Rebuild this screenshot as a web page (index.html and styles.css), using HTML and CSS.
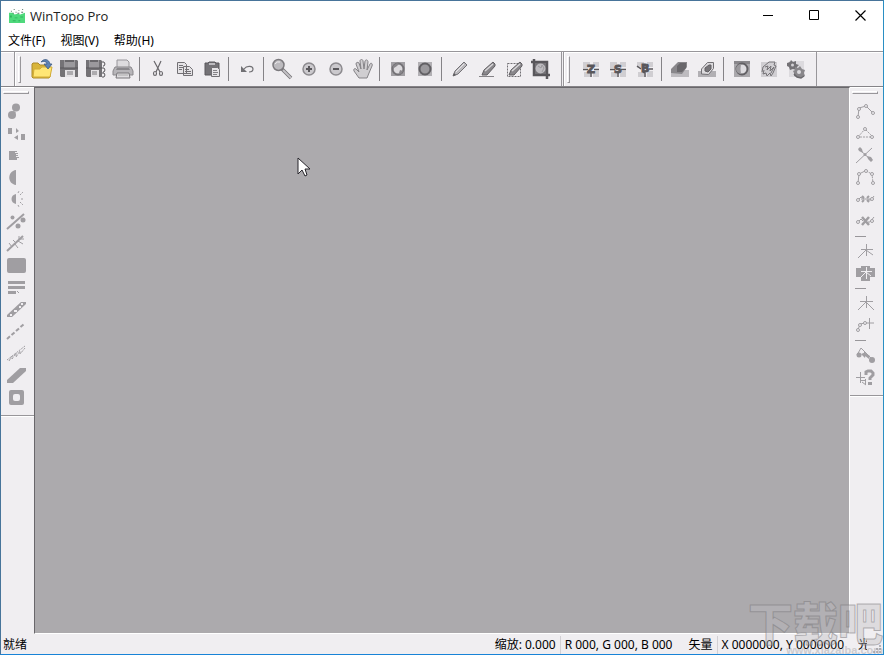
FILE: index.html
```
<!DOCTYPE html>
<html lang="zh-CN">
<head>
    <meta charset="UTF-8">
    <meta name="viewport" content="width=device-width, initial-scale=1.0">
    <title>WinTopo Pro</title>
    <link rel="stylesheet" href="styles.css">
</head>
<body>
<div class="window">
  <!-- Title bar -->
  <header class="title-bar">
    <svg class="logo" viewBox="0 0 17 17"><path d="M0 5h4l2 2 3-1 3 1 5-2v11H0z" fill="#4fd97c"/><path d="M1 8h2v2H1zM6 10h3v1H6zM12 9h3v1h-3zM4 13h3v1H4zM10 13h2v1h-2z" fill="#2fb55c"/><path d="M2 3h1v1H2zM5 1h1v1H5zM7 4h1v1H7zM10 2h1v1h-1zM14 1h1v1h-1zM13 4h2v1h-2zM4 5h1v1H4zM9 5h2v1H9z" fill="#557564"/></svg>
    <h1>WinTopo Pro</h1>
    <div class="window-buttons">
      <button aria-label="最小化"><svg viewBox="0 0 11 11"><path d="M0 5.5h10" stroke="#000"/></svg></button>
      <button aria-label="最大化"><svg viewBox="0 0 11 11"><path d="M.5 .5h9v9h-9z" fill="none" stroke="#000"/></svg></button>
      <button aria-label="关闭"><svg viewBox="0 0 11 11"><path d="M.5 .5l10 10M10.5 .5l-10 10" stroke="#000" stroke-width="1.2"/></svg></button>
    </div>
  </header>

  <!-- Menu -->
  <nav class="menu-bar">
    <button>文件(F)</button>
    <button>视图(V)</button>
    <button>帮助(H)</button>
  </nav>

  <!-- Toolbars -->
  <div class="toolbars">
    <div class="toolbar" role="toolbar" aria-label="标准">
      <span class="grip"></span>
      <button aria-label="打开"><svg viewBox="0 0 22 22"><path d="M1 6l1-1h5l2 2h9l1 2v10l-1 1H2l-1-1z" fill="#d9b53a" stroke="#ad8b2b"/><path d="M2 19l1-8h6l2-2h10l-2 10z" fill="#ffe675" stroke="#d2ac36"/><path d="M10 4c3-4 8-3 9 2h2l-4 5-4-5h3c-1-3-3-3-6-2z" fill="#5e82b5" stroke="#38547c" stroke-width=".7"/></svg></button>
      <button aria-label="保存"><svg viewBox="0 0 22 22"><path d="M2 2h17l1 1v16H3l-1-1z" fill="#747276"/><path d="M6 2h11v8H6z" fill="#9b999d"/><path d="M7 2h9v2H7z" fill="#69676b"/><path d="M7 12h10v7H7z" fill="#e4e2e5"/><path d="M9 14h6M9 16h6" stroke="#777579"/><path d="M2 10h18" stroke="#58565b"/></svg></button>
      <button aria-label="另存为"><svg viewBox="0 0 22 22"><path d="M1 2h15l1 1v16H2l-1-1z" fill="#747276"/><path d="M4 2h10v8H4z" fill="#9b999d"/><path d="M5 2h8v2H5z" fill="#69676b"/><path d="M6 12h8v7H6z" fill="#e4e2e5"/><path d="M7 14h5M7 16h5" stroke="#777579"/><path d="M1 10h16M17 4h2l1 2-1 2h-1M17 10h2l1 2-1 2h-1M17 15h2l1 2-1 2h-2" stroke="#58565b" fill="none"/></svg></button>
      <button aria-label="打印"><svg viewBox="0 0 22 22"><path d="M5 9V2h10l2 2v5" fill="#dddbde" stroke="#98969a"/><path d="M3 9h16l2 4v4H1v-4z" fill="#b7b5b9" stroke="#89878b"/><path d="M5 10h12l1 2H4z" fill="#89878b"/><path d="M5 15h12l1 5H4z" fill="#dedcdf" stroke="#79777b"/><path d="M6 17h10" stroke="#aaa"/></svg></button>
      <span class="separator"></span>
      <button aria-label="剪切"><svg viewBox="0 0 22 22" fill="none" stroke="#69676b" stroke-width="1.2"><path d="M7 3l6 11M14 3L9 14"/><ellipse cx="8" cy="15.5" rx="1.5" ry="2"/><ellipse cx="14" cy="15.5" rx="1.5" ry="2"/></svg></button>
      <button aria-label="复制"><svg viewBox="0 0 22 22" fill="#e5e3e6" stroke="#727074"><path d="M3.5 4.5h7l2 2v9h-9zM9.5 8.5h6l3 3v6h-9z"/><path d="M5 7.5h4M5 9.5h4M5 11.5h3M11 11.500h4M11 13.500h6M11 15.500h6"/></svg></button>
      <button aria-label="粘贴"><svg viewBox="0 0 22 22"><path d="M4 5h3l1-1h6l1 1h3v12H4z" fill="#747276" stroke="#5b595d"/><path d="M8 5h6v2H8z" fill="#bdbbbf"/><path d="M10.5 9.5h6l2 2v7h-8z" fill="#e7e5e8" stroke="#727074"/><path d="M12 12.5h4M12 14.5h5M12 16.5h4" stroke="#858387"/></svg></button>
      <span class="separator"></span>
      <button aria-label="撤销"><svg viewBox="0 0 22 22"><path d="M5 8v6h6z" fill="#717074"/><path d="M8 11c3-4 9-3 9 0 0 2-2 3-4 3" fill="none" stroke="#717074" stroke-width="1.2"/></svg></button>
      <span class="separator"></span>
      <button aria-label="缩放"><svg viewBox="0 0 22 22"><path d="M11 11l9 9" stroke="#737175" stroke-width="3.5"/><path d="M12 12l8 8" stroke="#c4c2c6" stroke-width="2"/><circle cx="7.5" cy="7" r="5.500" fill="#bcbabe" stroke="#7c7a7e" stroke-width="1.5"/><path d="M4 6q2-3 5-2" stroke="#eeecef" fill="none"/></svg></button>
      <button aria-label="放大"><svg viewBox="0 0 22 22"><circle cx="11" cy="11" r="6" fill="#cbc9cd" stroke="#8d8b8f" stroke-width="1.500"/><path d="M8 11h6M11 8v6" stroke="#59575b" stroke-width="2"/></svg></button>
      <button aria-label="缩小"><svg viewBox="0 0 22 22"><circle cx="11" cy="11" r="6" fill="#cbc9cd" stroke="#8d8b8f" stroke-width="1.500"/><path d="M8 11h6" stroke="#59575b" stroke-width="2"/></svg></button>
      <button aria-label="平移"><svg viewBox="0 0 22 22"><path d="M7 20l-5-7c-1-2 1-3 2-2l3 3L4 6c0-2 2-2 3-1l2 6-1-8c0-2 3-2 3 0l1 8 1-8c1-2 3-1 3 1l-1 8 3-6c1-2 3 0 2 2l-3 7-2 5z" fill="#d0ced1" stroke="#858387"/></svg></button>
      <span class="separator"></span>
      <button aria-label="图像"><svg viewBox="0 0 22 22"><path d="M4 4h14v14H4z" fill="#a19fa3"/><circle cx="11" cy="11" r="5.500" fill="#dcdadd" stroke="#747276" stroke-width="2"/><path d="M6 8l4-3 2 1-2 2-3 2-1 3zM13 12l3 1-2 3-2-1z" fill="#89878b"/></svg></button>
      <button aria-label="矢量"><svg viewBox="0 0 22 22"><path d="M4 4h14v14H4z" fill="#b2b0b4"/><circle cx="11" cy="11" r="5.500" fill="#9b999d" stroke="#626064" stroke-width="2"/></svg></button>
      <span class="separator"></span>
      <button aria-label="铅笔"><svg viewBox="0 0 22 22"><path d="M4 18l2-5 9-9 3 3-9 9z" fill="#bbb9bd" stroke="#747276"/><path d="M4 18l1-3 2 2z" fill="#5b595d"/><path d="M7 14l8-8" stroke="#e8e6e9"/></svg></button>
      <button aria-label="橡皮"><svg viewBox="0 0 22 22"><path d="M3 18.5h15" stroke="#858387"/><path d="M6 17l2-5 9-8 2 2v2l-8 9z" fill="#89878b" stroke="#626064"/><path d="M9 13l8-7" stroke="#d9d7da" stroke-width="1.5"/></svg></button>
      <button aria-label="擦除区域"><svg viewBox="0 0 22 22"><path d="M4.5 5.5h13v13h-13z" fill="none" stroke="#727074" stroke-dasharray="2 1"/><path d="M6 17l2-5 9-8 2 2v2l-8 9z" fill="#89878b" stroke="#626064"/><path d="M9 13l8-7" stroke="#d9d7da" stroke-width="1.5"/></svg></button>
      <button aria-label="裁剪"><svg viewBox="0 0 22 22"><path d="M4 1v16h16M1 4h16v17" fill="none" stroke="#59575b" stroke-width="2.5"/><path d="M5 5h11v11H5z" fill="#737175"/><circle cx="10.5" cy="10.5" r="5" fill="#bdbbbf"/><path d="M8 8l3 2 1-3 2 3-2 4" stroke="#9b999d" fill="none"/></svg></button>
    </div>
    <div class="toolbar" role="toolbar" aria-label="矢量化">
      <span class="grip"></span>
      <button aria-label="Z"><svg viewBox="0 0 22 22"><path d="M3 4h7v6H3zM13 4h6v5h-6zM4 14h6v5H4zM13 13h6v6h-6z" fill="#d0ced2"/><path d="M3 11.5h5M14 11.5h5M11 15v4" stroke="#59575b" stroke-width="1.5"/><text class="glyph" x="7" y="15">Z</text></svg></button>
      <button aria-label="S"><svg viewBox="0 0 22 22"><path d="M3 4h7v6H3zM13 4h6v5h-6zM4 14h6v5H4zM13 13h6v6h-6z" fill="#d0ced2"/><path d="M3 11.5h5M14 11.5h5M11 15v4" stroke="#59575b" stroke-width="1.5"/><text class="glyph" x="7" y="15">S</text></svg></button>
      <button aria-label="B"><svg viewBox="0 0 22 22"><path d="M3 4h7v6H3zM13 4h6v5h-6zM4 14h6v5H4zM13 13h6v6h-6z" fill="#d0ced2"/><path d="M3 8l4 3M15 11h4M9 14l2 1v4" fill="none" stroke="#59575b" stroke-width="1.5"/><text class="glyph" x="7" y="14">B</text></svg></button>
      <span class="separator"></span>
      <button aria-label="边缘"><svg viewBox="0 0 22 22"><path d="M2 12h18v7H2z" fill="#bdbbbf"/><path d="M2 15v-4l7-7h9v5l-5 7z" fill="#89878b"/><path d="M8 8l3-3h6v5l-4 4H8z" fill="#69676b"/></svg></button>
      <button aria-label="轮廓"><svg viewBox="0 0 22 22"><path d="M2 13h18v6H2z" fill="#b2b0b4"/><path d="M5.5 16v-5l6-6.5h6v6l-5 6z" fill="#dddbde" stroke="#737175"/><path d="M9 13v-3l4-3h2v4l-3 3z" fill="#777579" stroke="#626064"/></svg></button>
      <span class="separator"></span>
      <button aria-label="对比度"><svg viewBox="0 0 22 22"><path d="M3 3h16v16H3z" fill="#aaa8ac"/><path d="M3 3h16v3H3z" fill="#89878b"/><circle cx="11" cy="11" r="5.5" fill="#dedce0" stroke="#626064" stroke-width="2"/><path d="M10 6a5 5 0 0 0 0 10q-1-5 0-10" fill="#9b999d"/></svg></button>
      <button aria-label="细化"><svg viewBox="0 0 22 22"><path d="M3 4h16v15H3z" fill="#d0ced2"/><path d="M4 14l1-5 6-5h6l-1 3 2 1-3 7-2 3-1-3-3 3-1-3-3 1 1-4M7 9l3-1-1 4 4-4-1 5 4-4-3 6" fill="none" stroke="#747276"/></svg></button>
      <button aria-label="设置"><svg viewBox="0 0 22 22"><path d="M4 3h15v16H4z" fill="#dcdade"/><path d="M2 5l3-1 1-2 2 2 3-1v3l3 1-2 2-1 3-3-1-3 1-1-3-2-1z" fill="#747276"/><circle cx="7.500" cy="7" r="1.500" fill="#d4d2d6"/><path d="M8 13l2-1v-3l3 1 2-2 2 3 3 1-1 3 1 3-3 1-2 1-3-1-3-1v-3z" fill="#89878b"/><circle cx="14" cy="14" r="2" fill="#dcdade"/><path d="M9 16l3 3 4 1 3-2" fill="none" stroke="#69676b" stroke-width="1.500"/></svg></button>
    </div>
  </div>

  <!-- Work area -->
  <main class="workspace">
    <div class="side">
      <div class="side-bar" role="toolbar" aria-label="图像处理">
        <span class="side-grip"></span>
        <button aria-label="斑点"><svg viewBox="0 0 22 22"><circle cx="11" cy="7.5" r="4"/><circle cx="7" cy="15" r="4"/><path d="M8 11l3 1-2 2z"/></svg></button>
        <button aria-label="替换"><svg viewBox="0 0 22 22"><path d="M3 6h4v6H3zM11 6l3 3-3 2zM13 13v5l-4-2.5zM16 12h4v6h-4z"/></svg></button>
        <button aria-label="平滑"><svg viewBox="0 0 22 22"><path d="M4 7h8v1h-2v1h3v1h-2v1h2v1h-2v1h3v1h-2v2H4z"/></svg></button>
        <button aria-label="半色调"><svg viewBox="0 0 22 22"><path d="M11 4v15c-9-1-9-14 0-15"/></svg></button>
        <button aria-label="亮度"><svg viewBox="0 0 22 22"><path d="M11 6v10c-6-1-6-9 0-10"/><path class="line" d="M13 5l1-2M15 7l3-3M16 11h3M15 14l3 3M13 17l1 2" stroke-dasharray="2 1"/></svg></button>
        <button aria-label="去除孔"><svg viewBox="0 0 22 22"><path class="line wide" d="M2 19L19 4"/><circle cx="7.5" cy="7.5" r="2"/><circle cx="18" cy="10" r="2.5"/><circle cx="13" cy="16" r="2.5"/></svg></button>
        <button aria-label="去毛刺"><svg viewBox="0 0 22 22"><path class="line wide" d="M2 19L18 4"/><path class="line" d="M4 11l3 4M8 8l3 3M14 4v4M10 12l3 4M13 9l5 3M15 7h4"/></svg></button>
        <button aria-label="填充"><svg viewBox="0 0 22 22"><rect x="2" y="4" width="19" height="15" rx="2"/></svg></button>
        <button aria-label="线条"><svg viewBox="0 0 22 22"><path d="M3 5h17v3H3zM3 10h17v3H3zM3 15h8v3H3zM12 15h1v1h-1zM13 16h1v1h-1z"/></svg></button>
        <button aria-label="填孔"><svg viewBox="0 0 22 22"><path d="M2 19v-2L16 4h5v2L7 19z"/><path d="M5 16h2v2H5zM9 12h3v2H9zM14 8h2v2h-2zM16 5h2v2h-2z" fill="#f0eef1"/></svg></button>
        <button aria-label="断线"><svg viewBox="0 0 22 22"><path class="line wide" d="M2 19L19 4" stroke-dasharray="4 2"/></svg></button>
        <button aria-label="细线"><svg viewBox="0 0 22 22"><path class="line" d="M2 18L20 4" stroke-dasharray="2 1"/><path class="line" d="M4 19l3-5v3l4-6v4l4-6v3l5-6" stroke-dasharray="3 1"/></svg></button>
        <button aria-label="粗线"><svg viewBox="0 0 22 22"><path d="M2 19v-3L15 4h6v3L8 19z"/></svg></button>
        <button aria-label="孔洞"><svg viewBox="0 0 22 22"><rect x="4" y="4" width="15" height="15" rx="2"/><rect x="8" y="8" width="7" height="7" rx="2" fill="#f0eef1"/></svg></button>
      </div>
    </div>

    <div class="canvas">
      <svg class="pointer" viewBox="0 0 13 21"><path d="M1 1v16l4-4 3 6 2-1-2-6h5z" fill="#fff" stroke="#26242a"/></svg>
    </div>

    <div class="side">
      <div class="side-bar" role="toolbar" aria-label="矢量编辑">
        <span class="side-grip"></span>
        <button aria-label="折线"><svg viewBox="0 0 22 22" class="nodes"><path d="M4 17l1-9 7-2 7 7"/><circle cx="4" cy="17" r="1.5"/><circle cx="5" cy="9" r="1.5"/><circle cx="12" cy="6" r="1.5"/><circle cx="19" cy="13" r="1.5"/></svg></button>
        <button aria-label="闭合"><svg viewBox="0 0 22 22" class="nodes"><path d="M4 15l7-8 8 8z" stroke-dasharray="2 1"/><circle cx="4" cy="15" r="1.5"/><circle cx="11" cy="7" r="1.5"/><circle cx="18" cy="15" r="1.5"/></svg></button>
        <button aria-label="相交"><svg viewBox="0 0 22 22"><path class="line" d="M2 19L18 4M5 5l13 12"/><path d="M4 5l2-2 2 2 1 4-4-2zM13 12l4 1 2 3-2 2-3-3z"/><circle cx="11" cy="10.5" r="1.5"/></svg></button>
        <button aria-label="连接"><svg viewBox="0 0 22 22" class="nodes"><path d="M4 17l1-9 6-3"/><path d="M12 5l6 3 1 9" stroke-dasharray="2 1"/><circle cx="4" cy="17" r="1.5"/><circle cx="5" cy="8" r="1.5"/><circle cx="12" cy="5" r="1.5"/><circle cx="18" cy="8" r="1.5"/><circle cx="19" cy="17" r="1.5"/></svg></button>
        <button aria-label="删除节点"><svg viewBox="0 0 22 22" class="nodes"><path d="M3 13l4-4 3 2M14 12h3l3-4M7 11h9"/><path d="M8 8l2 2M15 8l-2 2M8 14l2-2M15 14l-2-2" stroke-width="2"/><circle cx="4" cy="12" r="1.5"/><circle cx="18" cy="11" r="1.5"/></svg></button>
        <button aria-label="删除线"><svg viewBox="0 0 22 22" class="nodes"><path d="M3 13l4-4 2 2M14 12h2l4-5"/><path d="M8 7l7 8M15 7l-7 8" stroke-width="2.5"/><circle cx="4" cy="12" r="1.5"/><circle cx="18" cy="11" r="1.5"/></svg></button>
        <span class="side-separator"></span>
        <button aria-label="添加点"><svg viewBox="0 0 22 22"><path class="line" d="M4 18l8-8 7 5M7 9.5h12M12.5 4v12"/></svg></button>
        <button aria-label="移动点"><svg viewBox="0 0 22 22"><path d="M7 4h9v2h5v9h-5v4H7v-4H2V6h5z"/><path d="M4 18L12 10l5 4M7 9.500h11M12.500 5v12" fill="none" stroke="#f0eef1"/></svg></button>
        <span class="side-separator"></span>
        <button aria-label="断点"><svg viewBox="0 0 22 22"><path class="line" d="M4 18l8-8 8 8M6 9.5h13M12.5 4v12"/></svg></button>
        <button aria-label="延伸"><svg viewBox="0 0 22 22" class="nodes"><path d="M4 16l2-6 5-1h9M15.500 4v11"/><circle cx="4" cy="16" r="1.5"/><circle cx="6" cy="11" r="1.5"/><circle cx="11" cy="9" r="1.5"/></svg></button>
        <span class="side-separator"></span>
        <button aria-label="移动线"><svg viewBox="0 0 22 22"><path class="line" d="M3 11l4-7 11 11"/><circle cx="5" cy="11" r="2.5"/><circle cx="18" cy="16" r="3"/><path d="M7 10l5-2-1 6zM10 8l6 4-1 3-5-4z"/></svg></button>
        <button aria-label="查询"><svg viewBox="0 0 22 22"><path class="line" d="M2 11.500h9M6.500 6v11M7 14.500h5M8 16l4 3M11.500 13v6"/><path class="line heavy" d="M12 9V6l2-1h3l2 2v2l-3 3v2"/><path d="M14 16h4v3h-4z"/></svg></button>
      </div>
    </div>
  </main>

  <!-- Status bar -->
  <footer class="status-bar">
    <span class="message">就绪</span>
    <span class="zoom">缩放: 0.000</span>
    <span class="divided colour">R 000, G 000, B 000</span>
    <span class="mode">矢量</span>
    <span class="divided coords">X 0000000, Y 0000000</span>
    <span class="snap">光</span>
    <svg class="resize" viewBox="0 0 9 9"><path d="M6 0h2v2H6zM3 3h2v2H3zM6 3h2v2H6zM0 6h2v2H0zM3 6h2v2H3zM6 6h2v2H6z" fill="#b5b3b7"/></svg>
  </footer>

  <div class="watermark">
    <strong>下载吧</strong>
    <small>www.xiazaiba.com</small>
  </div>
</div>
</body>
</html>
```
FILE: styles.css
```
* {
  box-sizing: border-box;
}
body {
  margin: 0;
  font-family: "Noto Sans", "Noto Sans CJK SC", sans-serif;
  font-size: 12px;
  color: #000;
}
button {
  border: 0;
  padding: 0;
  background: none;
  font: inherit;
  color: inherit;
}
svg {
  display: block;
}
.window {
  position: relative;
  display: flex;
  flex-direction: column;
  height: 100vh;
  overflow: hidden;
  border: 1px solid #47749a;
  border-right-color: #2a8fc4;
  border-bottom-color: #1883d7;
  background: #f0eef1;
}

/* title and menu */
.title-bar {
  display: flex;
  align-items: center;
  height: 29px;
  padding-left: 8px;
  background: #fff;
}
.logo {
  width: 16px;
  height: 16px;
}
.title-bar h1 {
  flex: 1;
  margin: 0 0 0 5px;
  font-family: "Open Sans", sans-serif;
  font-size: 13px;
  font-weight: normal;
  color: #222;
}
.window-buttons {
  display: flex;
}
.window-buttons button {
  display: grid;
  place-items: center;
  width: 46px;
  height: 28px;
}
.window-buttons svg {
  width: 11px;
  height: 11px;
}
.menu-bar {
  display: flex;
  gap: 15px;
  height: 21px;
  padding-left: 7px;
  background: #fff;
}
.menu-bar button {
  line-height: 20px;
}

/* top toolbars */
.toolbars {
  display: flex;
  height: 36px;
  padding-left: 13px;
  border-top: 1px solid #98969a;
  border-bottom: 1px solid #858387;
  box-shadow: inset 0 1px #fff;
}
.toolbar {
  display: flex;
  align-items: center;
  padding-right: 7px;
  border-left: 1px solid #98969a;
  border-right: 1px solid #98969a;
  box-shadow: inset 1px 0 #fff;
}
.toolbar + .toolbar {
  margin-left: 1px;
}
.toolbar button {
  display: grid;
  place-items: center;
  width: 27px;
  height: 28px;
}
.toolbar svg,
.side-bar svg {
  width: 22px;
  height: 22px;
}
.grip {
  width: 3px;
  height: 27px;
  margin: 0 7px 0 3px;
  border: 1px solid #98969a;
  border-color: #fff #98969a #98969a #fff;
}
.separator {
  width: 8px;
  height: 24px;
  background: linear-gradient(#858387, #858387) 3px 0 / 1px 100% no-repeat;
}
.glyph {
  font: bold 11px "DejaVu Sans", sans-serif;
  fill: #59575b;
  stroke: #59575b;
}

/* work area */
.workspace {
  display: flex;
  flex: 1;
  min-height: 0;
}
.side {
  width: 33px;
  border-top: 1px solid #fff;
}
.side-bar {
  display: flex;
  flex-direction: column;
  align-items: center;
  padding: 0 3px 7px 0;
  border-bottom: 1px solid #98969a;
  box-shadow: 0 1px #fff;
}
.side-bar button {
  width: 22px;
  height: 22px;
}
.side-bar svg {
  fill: #a09ea2;
}
.side-bar .line {
  fill: none;
  stroke: #a09ea2;
}
.side-bar .wide {
  stroke-width: 2;
}
.side-bar .heavy {
  stroke-width: 3;
}
.side-bar .nodes {
  fill: none;
  stroke: #a09ea2;
}
.nodes circle {
  fill: #f0eef1;
}
.side-grip {
  width: 26px;
  height: 3px;
  margin: 3px 0 6px;
  border: 1px solid #98969a;
  border-color: #fff #98969a #98969a #fff;
}
.side-separator {
  width: 22px;
  height: 8px;
  background: linear-gradient(#98969a, #98969a) 1px 4px / 11px 1px no-repeat;
}
.canvas {
  position: relative;
  flex: 1;
  border: 1px solid #69676b;
  border-right-color: #fff;
  border-bottom-color: #fff;
  background: #acaaad;
}
.pointer {
  position: absolute;
  left: 262px;
  top: 69px;
  width: 13px;
  height: 21px;
}

/* status bar */
.status-bar {
  display: flex;
  align-items: center;
  height: 20px;
  padding: 2px 1px 0 2px;
  line-height: 18px;
  white-space: nowrap;
}
.message {
  flex: 1;
}
.divided {
  padding-left: 4px;
  border-left: 1px solid #d2d0d4;
}
.zoom {
  margin-right: 4px;
}
.colour {
  margin-right: 16px;
}
.mode {
  margin-right: 4px;
}
.coords {
  margin-right: 14px;
}
.snap {
  width: 9px;
  overflow: hidden;
}
.resize {
  align-self: flex-end;
  width: 9px;
  height: 9px;
  margin-left: 6px;
}

/* site mark over the bottom right corner */
.watermark {
  position: absolute;
  right: 0;
  bottom: 0;
  display: flex;
  flex-direction: column;
  align-items: flex-end;
  font-family: "Noto Sans CJK SC", sans-serif;
  pointer-events: none;
}
.watermark strong {
  font-size: 45px;
  font-weight: 900;
  line-height: 48px;
  color: rgba(190, 188, 192, 0.4);
  -webkit-text-stroke: 1px rgba(120, 118, 122, 0.5);
}
.watermark small {
  font: bold 11px/8px "Liberation Sans", sans-serif;
  color: rgba(150, 148, 152, 0.4);
}
```
